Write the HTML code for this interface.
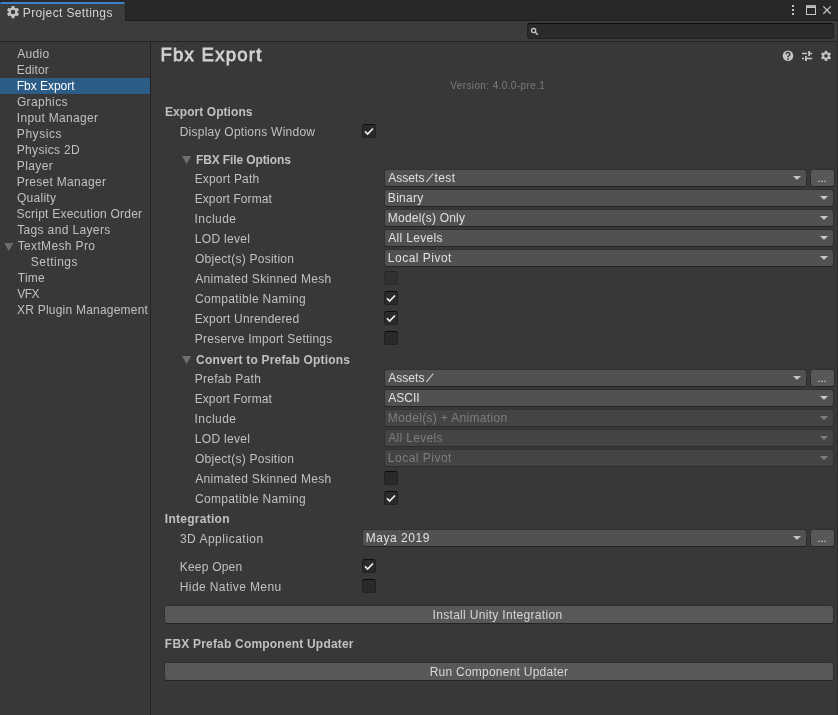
<!DOCTYPE html>
<html><head><meta charset="utf-8"><title>Project Settings</title>
<style>
html,body{margin:0;padding:0;}
body{width:838px;height:715px;overflow:hidden;background:#383838;position:relative;
 font-family:"Liberation Sans",sans-serif;font-size:12px;color:#c0c0c0;}
.a{position:absolute;}
#txt{position:absolute;left:0;top:0;width:838px;height:715px;will-change:transform;}
.t{position:absolute;white-space:nowrap;height:16px;line-height:16px;}
.r{font-size:12px;}
.b{font-size:12px;font-weight:bold;}
.title{font-size:18.6px;font-weight:normal;-webkit-text-stroke:0.8px #d2d2d2;height:24px;line-height:24px;color:#d2d2d2;}
.ver{font-size:10px;color:#7b7b7b;}
.dd{position:absolute;box-sizing:border-box;height:18px;background:#515151;border:1px solid #303030;border-bottom-color:#242424;border-radius:3px;}
.dd.dis{background:#444444;border-color:#333333;border-bottom-color:#2d2d2d;}
.dd:after{content:"";position:absolute;right:5px;top:6px;border-left:4.5px solid transparent;border-right:4.5px solid transparent;border-top:4.6px solid #c4c4c4;}
.dd.dis:after{border-top-color:#7e7e7e;}
.btn{position:absolute;box-sizing:border-box;background:#585858;border:1px solid #303030;border-bottom-color:#242424;border-radius:3px;}
.cb{position:absolute;box-sizing:border-box;width:14px;height:14px;background:#2a2a2a;border:1px solid #212121;border-top-color:#0d0d0d;border-radius:2.5px;}
.cb.dis{background:#303030;border-color:#2b2b2b;border-top-color:#242424;}
.cb svg{position:absolute;left:-1px;top:-1px;}
#ic{position:absolute;left:0;top:0;}
</style></head><body>

<div class="a" style="left:0;top:0;width:838px;height:21px;background:#282828"></div>
<div class="a" style="left:0;top:2px;width:125px;height:19px;box-sizing:border-box;background:#3c3c3c;border-top:2px solid #3a81d0;border-radius:2px 2px 0 0"></div>
<div class="a" style="left:125px;top:5px;width:1px;height:16px;background:#1f1f1f"></div>
<div class="a" style="left:0;top:21px;width:838px;height:20px;background:#3c3c3c"></div>
<div class="a" style="left:125px;top:20px;width:713px;height:1px;background:#1f1f1f"></div>
<div class="a" style="left:0;top:41px;width:838px;height:1px;background:#232323"></div>
<div class="a" style="left:150px;top:42px;width:1px;height:673px;background:#232323"></div>
<div class="a" style="left:837px;top:21px;width:1px;height:694px;background:#2d2d2d"></div>
<div class="a" style="left:527px;top:23px;width:307px;height:16px;box-sizing:border-box;background:#2a2a2a;border:1px solid #212121;border-top-color:#0d0d0d;border-radius:3px"></div>
<div class="a" style="left:0;top:78px;width:150px;height:16px;background:#2c5d87"></div>
<div class="dd" style="left:384px;top:169px;width:423px"></div>
<div class="btn" style="left:810px;top:169px;width:25px;height:18px"></div>
<div class="dd" style="left:384px;top:369px;width:423px"></div>
<div class="btn" style="left:810px;top:369px;width:25px;height:18px"></div>
<div class="dd" style="left:384px;top:189px;width:450px"></div>
<div class="dd" style="left:384px;top:209px;width:450px"></div>
<div class="dd" style="left:384px;top:229px;width:450px"></div>
<div class="dd" style="left:384px;top:249px;width:450px"></div>
<div class="dd" style="left:384px;top:389px;width:450px"></div>
<div class="dd dis" style="left:384px;top:409px;width:450px"></div>
<div class="dd dis" style="left:384px;top:429px;width:450px"></div>
<div class="dd dis" style="left:384px;top:449px;width:450px"></div>
<div class="dd" style="left:362px;top:529px;width:445px"></div>
<div class="btn" style="left:810px;top:529px;width:25px;height:18px"></div>
<div class="btn" style="left:164px;top:605px;width:670px;height:19px"></div>
<div class="btn" style="left:164px;top:662px;width:670px;height:19px"></div>
<div class="cb" style="left:362px;top:124px"><svg width="14" height="14" viewBox="0 0 14 14"><path d="M3 7.4 L5.6 10 L11 4.5" fill="none" stroke="#f0f0f0" stroke-width="1.7"/></svg></div>
<div class="cb dis" style="left:384px;top:271px"></div>
<div class="cb" style="left:384px;top:291px"><svg width="14" height="14" viewBox="0 0 14 14"><path d="M3 7.4 L5.6 10 L11 4.5" fill="none" stroke="#f0f0f0" stroke-width="1.7"/></svg></div>
<div class="cb" style="left:384px;top:311px"><svg width="14" height="14" viewBox="0 0 14 14"><path d="M3 7.4 L5.6 10 L11 4.5" fill="none" stroke="#f0f0f0" stroke-width="1.7"/></svg></div>
<div class="cb" style="left:384px;top:331px"></div>
<div class="cb" style="left:384px;top:471px"></div>
<div class="cb" style="left:384px;top:491px"><svg width="14" height="14" viewBox="0 0 14 14"><path d="M3 7.4 L5.6 10 L11 4.5" fill="none" stroke="#f0f0f0" stroke-width="1.7"/></svg></div>
<div class="cb" style="left:362px;top:559px"><svg width="14" height="14" viewBox="0 0 14 14"><path d="M3 7.4 L5.6 10 L11 4.5" fill="none" stroke="#f0f0f0" stroke-width="1.7"/></svg></div>
<div class="cb" style="left:362px;top:579px"></div>
<svg id="ic" width="838" height="715" viewBox="0 0 838 715">
<polygon points="4.2,243 13.399999999999999,243 8.8,251" fill="#6e6e6e"/>
<polygon points="182,156 191.2,156 186.6,164" fill="#6e6e6e"/>
<polygon points="182,356 191.2,356 186.6,364" fill="#6e6e6e"/>
<path d="M14.51 7.71 L14.44 5.92 L11.56 5.92 L11.49 7.71 L9.99 8.57 L8.41 7.74 L6.97 10.23 L8.48 11.19 L8.48 12.91 L6.97 13.87 L8.41 16.36 L9.99 15.53 L11.49 16.39 L11.56 18.18 L14.44 18.18 L14.51 16.39 L16.01 15.53 L17.59 16.36 L19.03 13.87 L17.52 12.91 L17.52 11.19 L19.03 10.23 L17.59 7.74 L16.01 8.57 Z M10.70 12.05 a2.30 2.30 0 1 0 4.60 0 a2.30 2.30 0 1 0 -4.60 0 Z" fill="#c4c4c4" fill-rule="evenodd"/>
<path d="M827.25 52.31 L827.19 50.84 L824.81 50.84 L824.75 52.31 L823.52 53.02 L822.21 52.34 L821.02 54.40 L822.27 55.19 L822.27 56.61 L821.02 57.40 L822.21 59.46 L823.52 58.78 L824.75 59.49 L824.81 60.96 L827.19 60.96 L827.25 59.49 L828.48 58.78 L829.79 59.46 L830.98 57.40 L829.73 56.61 L829.73 55.19 L830.98 54.40 L829.79 52.34 L828.48 53.02 Z M824.20 55.90 a1.80 1.80 0 1 0 3.60 0 a1.80 1.80 0 1 0 -3.60 0 Z" fill="#c4c4c4" fill-rule="evenodd"/>
<rect x="792" y="5" width="2" height="2" fill="#c4c4c4"/>
<rect x="792" y="9" width="2" height="2" fill="#c4c4c4"/>
<rect x="792" y="13" width="2" height="2" fill="#c4c4c4"/>
<rect x="806.5" y="5.5" width="9" height="9" fill="none" stroke="#c4c4c4" stroke-width="1"/>
<rect x="806" y="5" width="10" height="2" fill="#b0b0b0"/><rect x="806" y="7" width="10" height="1" fill="#c4c4c4"/>
<path d="M823.3 6.4 L830.7 13.8 M830.7 6.4 L823.3 13.8" stroke="#c4c4c4" stroke-width="1.3" fill="none"/>
<circle cx="533.6" cy="30.6" r="2.1" fill="none" stroke="#c4c4c4" stroke-width="1.3"/>
<path d="M535.3 32.3 L537.8 34.8" stroke="#c4c4c4" stroke-width="1.5" fill="none"/>
<circle cx="788" cy="55.7" r="5.3" fill="#c4c4c4"/>
<path d="M786.2 54.3 a1.8 1.8 0 1 1 2.6 1.6 q-0.8 0.4 -0.8 1.3" fill="none" stroke="#383838" stroke-width="1.6"/>
<rect x="787.2" y="58.2" width="1.6" height="1.6" fill="#383838"/>
<path d="M802 53.5 H807 M810 53.5 H812.2 M802 58.5 H804 M807 58.5 H812.2" stroke="#c4c4c4" stroke-width="1.4" fill="none"/>
<rect x="808.2" y="51" width="1.8" height="5" fill="#c4c4c4"/>
<rect x="805" y="56.1" width="1.9" height="4.9" fill="#c4c4c4"/>
</svg>
<div id="txt">
<div class="t" style="left:817.4px;top:170.4px;font-size:11px;color:#e4e4e4;letter-spacing:0.05px">...</div>
<div class="t" style="left:817.4px;top:370.4px;font-size:11px;color:#e4e4e4;letter-spacing:0.05px">...</div>
<div class="t" style="left:817.4px;top:530.4px;font-size:11px;color:#e4e4e4;letter-spacing:0.05px">...</div>
<div class="t r" id="t0" style="left:22.78px;top:5px;letter-spacing:0.372px;color:#d2d2d2">Project Settings</div>
<div class="t r" id="t1" style="left:17.29px;top:45.6px;letter-spacing:0.311px;">Audio</div>
<div class="t r" id="t2" style="left:16.78px;top:61.6px;letter-spacing:0.132px;">Editor</div>
<div class="t r" id="t3" style="left:16.78px;top:77.6px;letter-spacing:-0.025px;color:#ffffff">Fbx Export</div>
<div class="t r" id="t4" style="left:16.92px;top:93.6px;letter-spacing:0.372px;">Graphics</div>
<div class="t r" id="t5" style="left:16.86px;top:109.6px;letter-spacing:0.305px;">Input Manager</div>
<div class="t r" id="t6" style="left:16.87px;top:125.6px;letter-spacing:0.537px;">Physics</div>
<div class="t r" id="t7" style="left:16.78px;top:141.6px;letter-spacing:0.315px;">Physics 2D</div>
<div class="t r" id="t8" style="left:16.78px;top:157.6px;letter-spacing:0.401px;">Player</div>
<div class="t r" id="t9" style="left:16.78px;top:173.6px;letter-spacing:0.293px;">Preset Manager</div>
<div class="t r" id="t10" style="left:17.02px;top:189.6px;letter-spacing:0.267px;">Quality</div>
<div class="t r" id="t11" style="left:16.57px;top:205.6px;letter-spacing:0.230px;">Script Execution Order</div>
<div class="t r" id="t12" style="left:17.14px;top:221.6px;letter-spacing:0.361px;">Tags and Layers</div>
<div class="t r" id="t13" style="left:17.70px;top:237.6px;letter-spacing:0.354px;">TextMesh Pro</div>
<div class="t r" id="t14" style="left:30.80px;top:253.6px;letter-spacing:0.472px;">Settings</div>
<div class="t r" id="t15" style="left:17.75px;top:269.6px;letter-spacing:0.262px;">Time</div>
<div class="t r" id="t16" style="left:17.18px;top:285.6px;letter-spacing:-0.479px;">VFX</div>
<div class="t r" id="t17" style="left:17.02px;top:301.6px;letter-spacing:0.221px;">XR Plugin Management</div>
<div class="t title" id="t18" style="left:160.47px;top:43.2px;letter-spacing:1.222px;">Fbx Export</div>
<div class="t ver" id="t19" style="left:450.26px;top:78px;letter-spacing:0.387px;">Version: 4.0.0-pre.1</div>
<div class="t b" id="t20" style="left:165.00px;top:103.6px;letter-spacing:0.061px;">Export Options</div>
<div class="t r" id="t21" style="left:179.67px;top:123.6px;letter-spacing:0.252px;">Display Options Window</div>
<div class="t b" id="t22" style="left:195.93px;top:151.6px;letter-spacing:-0.118px;">FBX File Options</div>
<div class="t r" id="t23" style="left:194.67px;top:170.6px;letter-spacing:0.179px;">Export Path</div>
<div class="t r" id="t24" style="left:194.67px;top:190.6px;letter-spacing:0.103px;">Export Format</div>
<div class="t r" id="t25" style="left:194.56px;top:210.6px;letter-spacing:0.460px;">Include</div>
<div class="t r" id="t26" style="left:194.87px;top:230.6px;letter-spacing:0.293px;">LOD level</div>
<div class="t r" id="t27" style="left:194.99px;top:250.6px;letter-spacing:0.249px;">Object(s) Position</div>
<div class="t r" id="t28" style="left:195.20px;top:270.6px;letter-spacing:0.294px;">Animated Skinned Mesh</div>
<div class="t r" id="t29" style="left:194.98px;top:290.6px;letter-spacing:0.327px;">Compatible Naming</div>
<div class="t r" id="t30" style="left:194.67px;top:310.6px;letter-spacing:0.195px;">Export Unrendered</div>
<div class="t r" id="t31" style="left:194.87px;top:330.6px;letter-spacing:0.231px;">Preserve Import Settings</div>
<div class="t b" id="t32" style="left:196.11px;top:351.6px;letter-spacing:0.188px;">Convert to Prefab Options</div>
<div class="t r" id="t33" style="left:194.78px;top:370.6px;letter-spacing:0.266px;">Prefab Path</div>
<div class="t r" id="t34" style="left:194.67px;top:390.6px;letter-spacing:0.103px;">Export Format</div>
<div class="t r" id="t35" style="left:194.56px;top:410.6px;letter-spacing:0.460px;">Include</div>
<div class="t r" id="t36" style="left:194.87px;top:430.6px;letter-spacing:0.293px;">LOD level</div>
<div class="t r" id="t37" style="left:194.99px;top:450.6px;letter-spacing:0.249px;">Object(s) Position</div>
<div class="t r" id="t38" style="left:195.20px;top:470.6px;letter-spacing:0.294px;">Animated Skinned Mesh</div>
<div class="t r" id="t39" style="left:194.98px;top:490.6px;letter-spacing:0.327px;">Compatible Naming</div>
<div class="t b" id="t40" style="left:164.87px;top:510.6px;letter-spacing:0.263px;">Integration</div>
<div class="t r" id="t41" style="left:179.93px;top:530.6px;letter-spacing:0.502px;">3D Application</div>
<div class="t r" id="t42" style="left:179.78px;top:558.6px;letter-spacing:0.207px;">Keep Open</div>
<div class="t r" id="t43" style="left:179.78px;top:578.6px;letter-spacing:0.403px;">Hide Native Menu</div>
<div class="t b" id="t44" style="left:164.86px;top:635.6px;letter-spacing:0.197px;">FBX Prefab Component Updater</div>
<div class="t r" id="t45" style="left:388.20px;top:170px;letter-spacing:0.040px;color:#e0e0e0">Assets</div>
<div class="t r" id="t46" style="left:429.48px;top:170px;letter-spacing:0.200px;transform:scaleX(1.321);transform-origin:0 0;color:#e0e0e0">∕</div>
<div class="t r" id="t47" style="left:434.40px;top:170px;letter-spacing:0.452px;color:#e0e0e0">test</div>
<div class="t r" id="t48" style="left:387.87px;top:190px;letter-spacing:0.277px;color:#e0e0e0">Binary</div>
<div class="t r" id="t49" style="left:387.87px;top:210px;letter-spacing:0.200px;color:#e0e0e0">Model(s) Only</div>
<div class="t r" id="t50" style="left:388.29px;top:230px;letter-spacing:0.323px;color:#e0e0e0">All Levels</div>
<div class="t r" id="t51" style="left:387.86px;top:250px;letter-spacing:0.485px;color:#e0e0e0">Local Pivot</div>
<div class="t r" id="t52" style="left:388.20px;top:370px;letter-spacing:0.040px;color:#e0e0e0">Assets</div>
<div class="t r" id="t53" style="left:429.48px;top:370px;letter-spacing:0.200px;transform:scaleX(1.321);transform-origin:0 0;color:#e0e0e0">∕</div>
<div class="t r" id="t54" style="left:388.29px;top:390px;letter-spacing:-0.019px;color:#e0e0e0">ASCII</div>
<div class="t r" id="t55" style="left:387.87px;top:410px;letter-spacing:0.327px;color:#7d7d7d">Model(s) + Animation</div>
<div class="t r" id="t56" style="left:388.29px;top:430px;letter-spacing:0.323px;color:#7d7d7d">All Levels</div>
<div class="t r" id="t57" style="left:387.86px;top:450px;letter-spacing:0.485px;color:#7d7d7d">Local Pivot</div>
<div class="t r" id="t58" style="left:365.67px;top:530px;letter-spacing:0.541px;color:#e0e0e0">Maya 2019</div>
<div class="t r" id="t59" style="left:432.54px;top:606.5px;letter-spacing:0.313px;color:#d6d6d6">Install Unity Integration</div>
<div class="t r" id="t60" style="left:429.67px;top:663.5px;letter-spacing:0.243px;color:#d6d6d6">Run Component Updater</div>
</div>
</body></html>
